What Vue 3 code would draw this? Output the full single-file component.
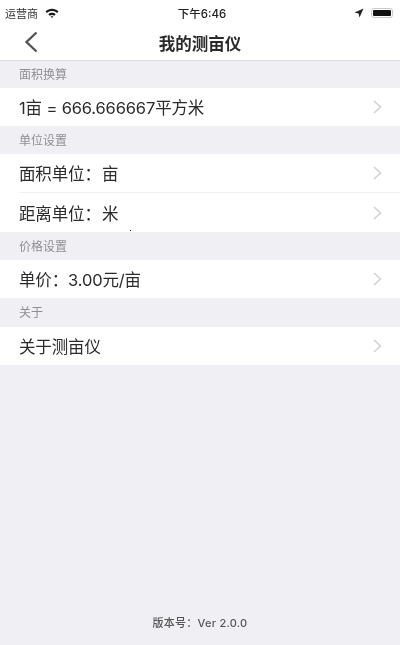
<script setup>
const sections = [
  { title: '面积换算', rows: ['1亩 = 666.666667平方米'] },
  { title: '单位设置', rows: ['面积单位：\u200a亩', '距离单位：\u200a米'] },
  { title: '价格设置', rows: ['单价：3.00元/亩'] },
  { title: '关于', rows: ['关于测亩仪'] },
]
</script>

<template>
  <div class="page">
    <div class="content">
      <header class="top">
        <div class="status">
          <div class="status-left">
            <span class="carrier">运营商</span>
            <svg class="wifi" viewBox="0 0 14 10" width="14" height="10">
              <path d="M0.5 3.4C4.2 0 9.8 0 13.5 3.4L12 5C9.1 2.4 4.9 2.4 2 5Z" fill="#1a1a1a" />
              <path d="M3.3 6.2C5.4 4.4 8.6 4.4 10.7 6.2L9.2 7.7C8 6.7 6 6.7 4.8 7.7Z" fill="#1a1a1a" />
              <path d="M5.7 8.6C6.5 8 7.5 8 8.3 8.6L7 10Z" fill="#1a1a1a" />
            </svg>
          </div>
          <span class="clock">下午6:46</span>
          <div class="status-right">
            <svg viewBox="0 0 10 10" width="10" height="10">
              <path d="M9.5 0.5L0.5 4.5L4.6 5.4L5.5 9.5Z" fill="#222" />
            </svg>
            <span class="battery"><span class="battery-fill"></span></span>
          </div>
        </div>
        <nav class="nav">
          <svg class="back" viewBox="0 0 14 22" width="14" height="22">
            <path d="M12.5 1.5L2.5 11L12.5 20.5" fill="none" stroke="#555" stroke-width="2.4" />
          </svg>
          <h1 class="title">我的测亩仪</h1>
        </nav>
      </header>

      <main class="list">
        <section v-for="s in sections" :key="s.title">
          <div class="section-title">{{ s.title }}</div>
          <div class="rows">
            <div v-for="r in s.rows" :key="r" class="row">
              <span class="row-text">{{ r }}</span>
              <svg viewBox="0 0 9 14" width="9" height="14">
                <path d="M1 1L7.5 7L1 13" fill="none" stroke="#cfcfd3" stroke-width="1.4" />
              </svg>
            </div>
          </div>
        </section>
      </main>

      <footer class="version">版本号：Ver 2.0.0</footer>
    </div>
    <span class="speck"></span>
  </div>
</template>

<style>
html, body { margin: 0; padding: 0; }
</style>

<style scoped>
.page {
  position: relative;
  width: 400px;
  height: 645px;
  background: #efeff4;
  overflow: hidden;
}
.content {
  height: 100%;
  display: flex;
  flex-direction: column;
  font-family: Inter, "Noto Sans CJK SC", sans-serif;
  filter: blur(0.45px);
}
.speck {
  position: absolute;
  left: 130px;
  top: 230px;
  width: 1px;
  height: 1px;
  background: #222;
}
.top {
  background: #fff;
  height: 61px;
  box-sizing: border-box;
  border-bottom: 1px solid #dedee2;
}
.status {
  height: 26px;
  padding: 0 5px;
  display: flex;
  align-items: center;
  position: relative;
  justify-content: space-between;
}
.status-left { display: flex; align-items: center; gap: 7px; }
.carrier { font-size: 11px; color: #333; }
.wifi { margin-top: -1px; }
.clock {
  position: absolute;
  left: 4px;
  right: 0;
  text-align: center;
  font-size: 11.5px;
  font-weight: 500;
  color: #222;
}
.status-right { display: flex; align-items: center; gap: 7px; padding-right: 2px; }
.battery {
  width: 22px;
  height: 10px;
  box-sizing: border-box;
  border: 1px solid #c9c9c9;
  border-radius: 3px;
  padding: 1px;
  display: flex;
}
.battery-fill { flex: 1; background: #111; border-radius: 1px; }
.nav {
  height: 34px;
  display: flex;
  align-items: center;
  justify-content: center;
  position: relative;
}
.back { position: absolute; left: 24px; top: 5px; }
.title {
  margin: 0;
  font-size: 16.5px;
  font-weight: 600;
  color: #2a2a2a;
}
.list { flex: 1; }
.section-title {
  height: 28px;
  box-sizing: border-box;
  padding: 2px 0 0 19px;
  line-height: 26px;
  font-size: 12px;
  color: #8e8e93;
}
section:first-child .section-title {
  height: 27px;
  padding-top: 0;
  line-height: 27px;
}
section:last-child .section-title { height: 29px; }
.rows { background: #fff; }
.row {
  height: 38px;
  margin-left: 19px;
  padding-right: 18px;
  display: flex;
  align-items: center;
  justify-content: space-between;
  box-sizing: border-box;
}
.row + .row { height: 40px; border-top: 1px solid #f0f0f3; }
.row-text { font-size: 16.5px; letter-spacing: -0.15px; color: #2b2b2b; }
.version {
  height: 55px;
  box-sizing: border-box;
  padding-top: 24px;
  text-align: center;
  font-size: 11px;
  font-weight: 500;
  color: #555;
  letter-spacing: 0.25px;
}
</style>
